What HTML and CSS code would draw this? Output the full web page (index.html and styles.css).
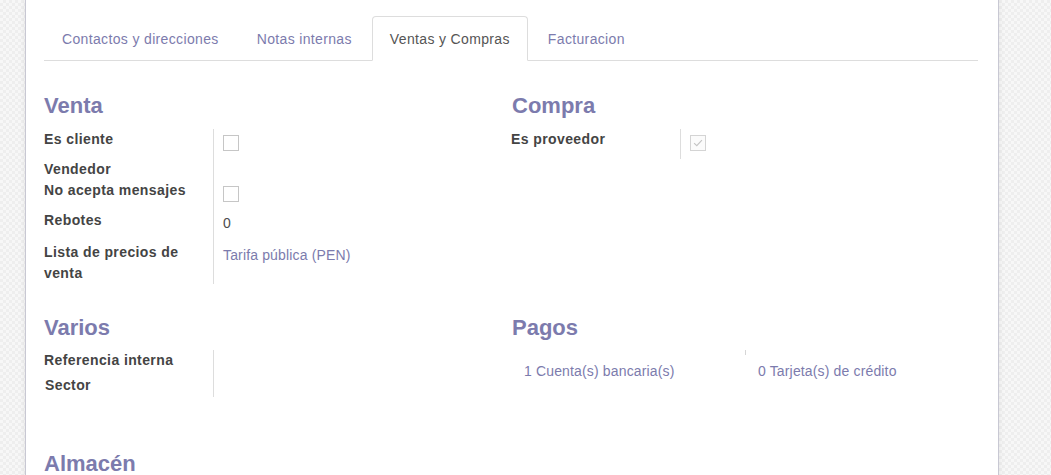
FILE: index.html
```html
<!DOCTYPE html>
<html lang="es">
<head>
<meta charset="utf-8">
<title>Ventas y Compras</title>
<link rel="stylesheet" href="styles.css">
</head>
<body>
<div class="sheet">
  <ul class="tabs">
    <li class="tab"><a>Contactos y direcciones</a></li>
    <li class="tab"><a>Notas internas</a></li>
    <li class="tab active"><a>Ventas y Compras</a></li>
    <li class="tab"><a>Facturacion</a></li>
  </ul>

  <div class="groups">
    <section class="group">
      <h2 class="title">Venta</h2>
      <div class="fields">
        <div class="lbl">Es cliente</div>
        <div class="val"><span class="cb"></span></div>
        <div class="lbl">Vendedor</div>
        <div class="val"></div>
        <div class="lbl">No acepta mensajes</div>
        <div class="val"><span class="cb"></span></div>
        <div class="lbl">Rebotes</div>
        <div class="val">0</div>
        <div class="lbl">Lista de precios de venta</div>
        <div class="val"><a class="link">Tarifa pública (PEN)</a></div>
      </div>
    </section>

    <section class="group group-right">
      <h2 class="title">Compra</h2>
      <div class="fields">
        <div class="lbl">Es proveedor</div>
        <div class="val"><span class="cb checked"><svg viewBox="0 0 16 16" width="14" height="14"><path d="M3.5 8.2 L6.6 11 L12.5 4.8" fill="none" stroke="#c4c4c4" stroke-width="1.3"/></svg></span></div>
      </div>
    </section>

    <section class="group">
      <h2 class="title title-tight">Varios</h2>
      <div class="fields">
        <div class="lbl row-a">Referencia interna</div>
        <div class="val val-empty row-a"></div>
        <div class="lbl row-b sector">Sector</div>
        <div class="val val-empty row-b"></div>
      </div>
    </section>

    <section class="group group-right">
      <h2 class="title title-tight">Pagos</h2>
      <div class="buttons">
        <a class="stat">1 Cuenta(s) bancaria(s)</a>
        <a class="stat stat-sep">0 Tarjeta(s) de crédito</a>
      </div>
    </section>

    <section class="group">
      <h2 class="title">Almacén</h2>
    </section>
  </div>
</div>
</body>
</html>
```

FILE: styles.css
```css
html, body {
  margin: 0;
  padding: 0;
}

body {
  font-family: "Liberation Sans", Arial, sans-serif;
  font-size: 14px;
  color: #4c4c4c;
  height: 475px;
  overflow: hidden;
  background-color: #f3f3f3;
  background-image: repeating-conic-gradient(#eeeeee 0 25%, #f7f7f7 0 50%);
  background-size: 6px 6px;
}

.sheet {
  margin-left: 25px;
  width: 934px;
  min-height: 520px;
  padding: 16px 20px 0 18px;
  background: #fff;
  border: 1px solid #c8c8d3;
  border-top: none;
  box-shadow: 0 0 6px rgba(0, 0, 0, 0.08);
}

.tabs {
  list-style: none;
  margin: 0;
  padding: 0;
  display: flex;
  border-bottom: 1px solid #dddddd;
}

.tab {
  margin-right: 2px;
  margin-bottom: -1px;
}

.tab a {
  display: block;
  padding: 12px 17px 11px;
  line-height: 20px;
  border: 1px solid transparent;
  border-radius: 4px 4px 0 0;
  color: #7c7bad;
  letter-spacing: 0.35px;
  cursor: pointer;
}

.tab.active a {
  color: #555555;
  background: #fff;
  border-color: #dddddd;
  border-bottom-color: #fff;
}

.groups {
  display: grid;
  grid-template-columns: 467px 467px;
  row-gap: 32px;
  padding-top: 33px;
}

.group-right .title {
  padding-left: 1px;
}

.title {
  margin: 0 0 11px 0;
  font-size: 22px;
  line-height: 24px;
  font-weight: bold;
  color: #7c7bad;
}

.title-tight {
  margin-bottom: 10px;
}

.fields {
  display: grid;
  grid-template-columns: 169px 1fr;
}

.lbl {
  font-weight: bold;
  color: #444444;
  line-height: 21px;
  letter-spacing: 0.4px;
  padding-right: 8px;
}

.val {
  border-left: 1px solid #dddddd;
  padding: 3px 0 8px 9px;
  line-height: 21px;
  letter-spacing: 0.15px;
}

.val-empty {
  padding: 0;
}

.row-a {
  min-height: 25px;
}

.row-b {
  min-height: 22px;
}

.sector {
  padding-left: 1px;
}

.cb {
  display: block;
  width: 14px;
  height: 14px;
  margin-top: 3px;
  border: 1px solid #c6c6c6;
  background: #fff;
}

.cb.checked {
  border-color: #d4d4d4;
  background: #fbfbfb;
}

.cb svg {
  display: block;
}

.link {
  color: #7c7bad;
  cursor: pointer;
}

.buttons {
  display: grid;
  grid-template-columns: 234px 233px;
  margin-bottom: 28px;
}

.stat {
  position: relative;
  display: flex;
  align-items: center;
  height: 42px;
  padding: 0 0 0 13px;
  box-sizing: border-box;
  color: #7c7bad;
  letter-spacing: 0.15px;
  cursor: pointer;
}

.stat-sep::before {
  content: "";
  position: absolute;
  left: 0;
  top: 0;
  width: 1px;
  height: 5px;
  background: #d6d6d6;
}
```
